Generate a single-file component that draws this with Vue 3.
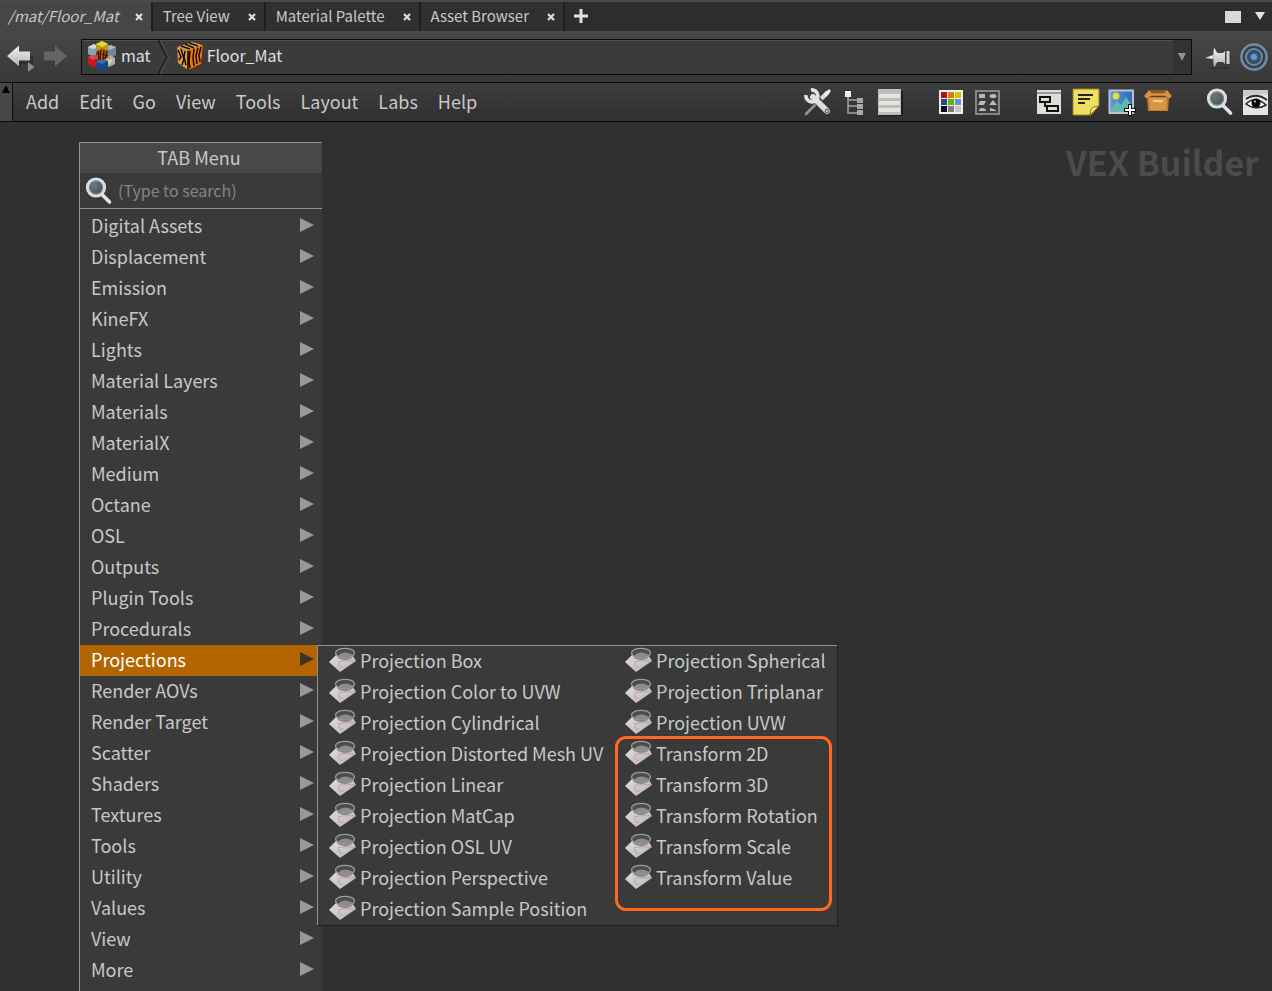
<script setup>
import { ref } from 'vue'

const tabs = [
  { name: '/mat/Floor_Mat', active: true },
  { name: 'Tree View' },
  { name: 'Material Palette' },
  { name: 'Asset Browser' },
]
const menus = ['Add', 'Edit', 'Go', 'View', 'Tools', 'Layout', 'Labs', 'Help']
const categories = [
  'Digital Assets', 'Displacement', 'Emission', 'KineFX', 'Lights', 'Material Layers',
  'Materials', 'MaterialX', 'Medium', 'Octane', 'OSL', 'Outputs', 'Plugin Tools',
  'Procedurals', 'Projections', 'Render AOVs', 'Render Target', 'Scatter', 'Shaders',
  'Textures', 'Tools', 'Utility', 'Values', 'View', 'More',
]
const nodes = [
  'Projection Box', 'Projection Color to UVW', 'Projection Cylindrical',
  'Projection Distorted Mesh UV', 'Projection Linear', 'Projection MatCap',
  'Projection OSL UV', 'Projection Perspective', 'Projection Sample Position',
  'Projection Spherical', 'Projection Triplanar', 'Projection UVW',
  'Transform 2D', 'Transform 3D', 'Transform Rotation', 'Transform Scale', 'Transform Value',
]
const selected = 'Projections'
const query = ref('')
const swatches = ['#b5121b', '#e07a10', '#d8c400', '#1c4f86', '#5cb800', '#6d8fd0', '#0a0a14', '#7c7c7c', '#c2c8c8']
</script>

<template>
  <div class="pane">
    <svg class="defs" aria-hidden="true">
      <defs>
        <linearGradient id="metal" x1="0" y1="0" x2="0" y2="1">
          <stop offset="0" stop-color="#f2f2ee" /><stop offset="1" stop-color="#b4b4b0" />
        </linearGradient>
        <radialGradient id="lens" cx=".4" cy=".35" r=".7">
          <stop offset="0" stop-color="#6d7a80" /><stop offset="1" stop-color="#3f4a50" />
        </radialGradient>
        <linearGradient id="paper" x1="0" y1="0" x2="1" y2="1">
          <stop offset="0" stop-color="#dedede" /><stop offset="1" stop-color="#b9b4b5" />
        </linearGradient>
        <linearGradient id="sky" x1="0" y1="0" x2="1" y2="0">
          <stop offset="0" stop-color="#5a9de0" /><stop offset="1" stop-color="#2c66b8" />
        </linearGradient>
        <symbol id="magnifier" viewBox="0 0 28 28">
          <path d="M17 17.500 24.500 25" stroke="#e2e2e2" stroke-width="3.600" stroke-linecap="round" />
          <circle cx="11" cy="10.500" r="8.600" fill="url(#lens)" stroke="#dcdedf" stroke-width="3" />
          <circle cx="11" cy="10.500" r="6.600" fill="none" stroke="#8b9499" stroke-width="1" />
        </symbol>
        <symbol id="node" viewBox="0 0 28 26">
          <path d="M0 15 8 7 24 9 27 14 11 25Z" fill="url(#paper)" />
          <path d="M7 7 9 11Q16 15 23 11L26 6Z" fill="#858585" />
          <ellipse cx="16" cy="6" rx="9.500" ry="4.700" fill="#4c4c4c" stroke="#9c9c9c" stroke-width="1.300" />
          <path d="M9 8.500Q15 3 24 8 17 13 9 8.500Z" fill="#8c8c8c" />
          <path d="M9 15Q15 13 26 14M10 16Q9 21 14 20" fill="none" stroke="#c99aa0" stroke-width="1" />
        </symbol>
      </defs>
    </svg>

    <header class="tabs">
      <div v-for="t in tabs" :key="t.name" class="tab" :class="{ active: t.active }">
        <button class="tab-name">{{ t.name }}</button>
        <button class="close" :aria-label="'Close ' + t.name">
          <svg width="8" height="8" viewBox="0 0 8 8"><path d="M1 1 7 7M7 1 1 7" stroke="#dedede" stroke-width="2.200" /></svg>
        </button>
      </div>
      <button class="add" aria-label="New tab">
        <svg width="16" height="16" viewBox="0 0 16 16"><path d="M8 1V15M1 8H15" stroke="#e0e0e0" stroke-width="3" /></svg>
      </button>
      <div class="window-tools">
        <button aria-label="Maximize pane"><svg width="16" height="14" viewBox="0 0 16 14"><path d="M0 1H16V13H0Z" fill="#d9d9d9" /></svg></button>
        <button aria-label="Pane menu"><svg width="10" height="14" viewBox="0 0 10 14"><path d="M0 2H10L5 10Z" fill="#e4e4e4" /></svg></button>
      </div>
    </header>

    <nav class="path">
      <button aria-label="Back">
        <svg width="32" height="32" viewBox="0 0 32 32">
          <path d="M5 18 17 29V23H29V15" fill="#252525" opacity=".6" />
          <path d="M3 15 15 4.500V10.500H26V19.500H15V25.500Z" fill="url(#metal)" />
          <path d="M24 21 30.500 26 24 31Z" fill="#8e8e8e" />
        </svg>
      </button>
      <button aria-label="Forward">
        <svg width="32" height="32" viewBox="0 0 32 32"><path d="M27 15 15 4.500V10.500H4V19.500H15V25.500Z" fill="#646464" /></svg>
      </button>
      <div class="field">
        <button class="crumb">
          <svg width="30" height="30" viewBox="0 0 30 30">
            <path d="M1 6 7 3 12 6V14L5 15 1 13Z" fill="#8ba2ad" /><path d="M1 6 7 3 12 6 6 8Z" fill="#c8dce4" />
            <path d="M18 7 23 4 29 6V14L23 17 18 14Z" fill="#71859f" /><path d="M18 7 23 4 29 6 23 9Z" fill="#a9b9ca" />
            <path d="M9 3 15 0 21 3V8L15 10 9 8Z" fill="#b99c08" /><path d="M9 3 15 0 21 3 15 6Z" fill="#e8d335" />
            <path d="M1 16 6 14 11 17V25L6 26 1 23Z" fill="#c81824" /><path d="M1 16 6 14 11 17 6 19Z" fill="#e64850" />
            <path d="M18 17 24 14 28 17V23L22 26 18 24Z" fill="#aaa" /><path d="M20 18 23 23M25 18 23 21" stroke="#f0d598" stroke-width="2" />
            <path d="M9 21 15 18 21 20V27L15 30 9 27Z" fill="#18458a" /><path d="M9 21 15 18 21 20 15 23Z" fill="#376fb6" />
            <path d="M9 10 15 7 21 10V17L15 20 9 17Z" fill="#b75b10" />
            <path d="M11 10 12 18M14 9 13 19M17 9 16 19M20 10 18 18M9 13 13 12M15 13 21 15" stroke="#2b1407" stroke-width="1.200" />
          </svg>
          <span>mat</span>
        </button>
        <svg class="chevron" width="11" height="34" viewBox="0 0 11 34"><path d="M0 0 9 17 0 34" fill="none" stroke="#1b1b1b" stroke-width="1.500" /><path d="M2 0 10.500 17 2 34" fill="none" stroke="#555" /></svg>
        <button class="crumb leaf">
          <svg width="28" height="30" viewBox="0 0 28 30">
            <path d="M1 6 16 1 27 4 25 23 12 29 2 22Z" fill="#120b06" />
            <path d="M1 6 16 1 27 4 12 10Z" fill="#d2a251" />
            <path d="M1 6 12 10V29L2 22Z" fill="#d99b40" />
            <path d="M12 10 27 4 25 23 12 29Z" fill="#ec740e" />
            <path d="M5 5 14 8M9 3 18 7M13 2 22 5M2 9 5 16 3 19M5 8 8 18 6 24M9 10 8 16 10 24M14 10 13 20 14 27M18 8 17 17 18 25M22 7 20 15 21 23M25 6 23 14 24 21M12 10V29" fill="none" stroke="#170a02" stroke-width="1.500" />
          </svg>
          <span>Floor_Mat</span>
        </button>
        <button class="drop" aria-label="Recent paths"><svg width="8" height="8" viewBox="0 0 8 8"><path d="M0 0H8L4 8Z" fill="#929292" /></svg></button>
      </div>
      <button aria-label="Pin">
        <svg width="28" height="28" viewBox="0 0 28 28">
          <path d="M1 15 9 12V16Z" fill="#e5e5e5" /><path d="M10 5C12 6 12 10 14 10H19L21 8V21L19 19H14C12 19 12 23 10 24 9 19 9 10 10 5Z" fill="url(#metal)" />
          <path d="M22.500 8H25.500V21H22.500Z" fill="#d2d2d2" /><path d="M6 25H25" stroke="#292929" />
        </svg>
      </button>
      <button class="link" aria-label="Link pane">
        <svg width="28" height="28" viewBox="0 0 28 28">
          <circle cx="14" cy="14" r="12.600" fill="#31404e" stroke="#748ba5" stroke-width="2.500" />
          <circle cx="14" cy="14" r="8" fill="#3c4855" stroke="#7188a3" stroke-width="2" />
          <circle cx="14" cy="14" r="5" fill="#355b86" /><circle cx="14" cy="14" r="3" fill="#5f9be2" />
        </svg>
      </button>
    </nav>

    <div class="menubar">
      <button class="stow" aria-label="Stow bar"><svg width="10" height="8" viewBox="0 0 10 8"><path d="M5 0 9 8H1Z" fill="#000" /></svg></button>
      <button v-for="m in menus" :key="m" class="menu">{{ m }}</button>
      <div class="tools">
        <div class="group">
          <button aria-label="Tools">
            <svg width="28" height="28" viewBox="0 0 28 28">
              <path d="M2 26 14 14" stroke="#929292" stroke-width="2.600" stroke-linecap="round" />
              <path d="M14 14 24 4" stroke="#d8d8d8" stroke-width="4.500" />
              <path d="M20 6 25 1 27 3 22 9Z" fill="#ededed" />
              <path d="M12 11 23 23" stroke="#3a3a3a" stroke-width="8" stroke-linecap="round" />
              <path d="M9 9 23 23" stroke="#dededb" stroke-width="6" stroke-linecap="round" />
              <path d="M7 2A6 6 0 1 1 2 7" fill="none" stroke="#e3e3e0" stroke-width="3.600" />
              <circle cx="23" cy="23" r="2" fill="#bbb" stroke="#555" />
            </svg>
          </button>
          <button aria-label="Tree view">
            <svg width="28" height="28" viewBox="0 0 28 28"><path d="M8 8V25H18M8 12H18M8 18H18" fill="none" stroke="#a4a4a4" stroke-width="1.500" /><path d="M5 3H11V9H5Z" fill="#eee" /><path d="M17 10H23V15H17ZM17 16H23V21H17ZM17 22H23V27H17Z" fill="#a9a9a9" /></svg>
          </button>
          <button aria-label="List view">
            <svg width="28" height="28" viewBox="0 0 28 28"><path d="M3 3H27V28H3Z" fill="#1b1b1b" /><path d="M2 1H25V27H2Z" fill="#bdbdb8" /><path d="M3 6H24V10H3ZM3 13H24V17H3ZM3 20H24V24H3Z" fill="#e3e3e0" /></svg>
          </button>
        </div>
        <div class="group">
          <button aria-label="Color palette">
            <svg width="28" height="28" viewBox="0 0 28 28"><path d="M1 2H25V26H1Z" fill="#f0f0f0" /><rect v-for="(c, i) in swatches" :key="c" :x="3 + (i % 3) * 7" :y="4 + Math.floor(i / 3) * 7" width="6" height="6" :fill="c" /></svg>
          </button>
          <button aria-label="Shape palette">
            <svg width="28" height="28" viewBox="0 0 28 28"><path d="M2 3H25V26H2Z" fill="#3b3b3b" stroke="#868686" stroke-width="2" /><path d="M5 6H11V10H5ZM6 13H12L10 17H4ZM15 17 19 12 23 17ZM5 23Q5 20 8 20 12 20 12 23ZM16 23V20L22 22V23Z" fill="#b9b9b9" /><ellipse cx="19" cy="8" rx="3.500" ry="2" fill="#b9b9b9" /></svg>
          </button>
        </div>
        <div class="group">
          <button aria-label="Network box">
            <svg width="28" height="28" viewBox="0 0 28 28"><path d="M1 2H25V26H1Z" fill="#deded9" /><path d="M1 5H25" stroke="#555" /><path d="M4 9H14V14H4ZM11 18H22V23H11ZM9 14V18H11" fill="none" stroke="#111" stroke-width="2" /></svg>
          </button>
          <button aria-label="Sticky note">
            <svg width="28" height="28" viewBox="0 0 28 28"><path d="M1 1H27V18L19 27H1Z" fill="#ecdf61" stroke="#9c8519" /><path d="M27 18 18 27C19 22 18 19 27 18Z" fill="#fff09c" stroke="#7d6813" /><path d="M6 7H21M6 11H18M6 15H13" stroke="#272617" stroke-width="2" /></svg>
          </button>
          <button aria-label="Background image">
            <svg width="30" height="28" viewBox="0 0 30 28"><path d="M2.500 2.500H26V25H2.500Z" fill="url(#sky)" stroke="#b8c3d1" stroke-width="2" /><circle cx="9" cy="8" r="3.500" fill="#f2d43b" /><path d="M4 21 10 13 14 17 19 9 25 18V24H4Z" fill="#65b7ae" /><path d="M21 16H25V20H29V24H25V28H21V24H17V20H21Z" fill="#111" /><path d="M23 17V27M18 22H28" stroke="#fff" stroke-width="2" /></svg>
          </button>
          <button aria-label="Asset box">
            <svg width="28" height="28" viewBox="0 0 28 28"><path d="M3 9H25L24 23H4Z" fill="#c47b2e" /><path d="M5 2H23L25 8H3Z" fill="#8e571d" /><path d="M5 2 0 8 3 11 7 8H21L25 11 28 8 23 2 20 5H8Z" fill="#d39549" stroke="#8d561d" stroke-width=".7" /><path d="M5 10H23L22 22H6Z" fill="#d89646" /><path d="M9 13H19" stroke="#f5cb8c" stroke-width="2" /></svg>
          </button>
        </div>
        <div class="group">
          <button aria-label="Find node"><svg width="28" height="28"><use href="#magnifier" /></svg></button>
          <button aria-label="Display options">
            <svg width="28" height="28" viewBox="0 0 28 28"><path d="M1 2H26V27H1Z" fill="#e5e5e5" /><path d="M1 2H26V7Q14 4 1 9Z" fill="#c9c9c9" /><path d="M4 11Q14 4 25 12" fill="none" stroke="#292929" stroke-width="1.800" /><path d="M4 16Q13 7 24 17 14 23 4 16Z" fill="#fff" stroke="#252525" stroke-width="1.500" /><circle cx="14" cy="15" r="4.500" fill="#090909" /><circle cx="13" cy="13.500" r="1" fill="#ddd" /></svg>
          </button>
        </div>
      </div>
    </div>

    <main class="network">
      <h1>VEX Builder</h1>
      <section class="tab-menu">
        <h2>TAB Menu</h2>
        <label class="search">
          <svg width="28" height="28"><use href="#magnifier" /></svg>
          <input v-model="query" type="text" placeholder="(Type to search)" aria-label="Search nodes" />
        </label>
        <ul class="categories">
          <li v-for="c in categories" :key="c">
            <button class="category" :class="{ selected: c === selected }">
              {{ c }}
              <svg width="14" height="14" viewBox="0 0 14 14"><path d="M0 0 14 7 0 14Z" fill="currentColor" /></svg>
            </button>
            <div v-if="c === selected" class="submenu">
              <button v-for="n in nodes" :key="n" class="node"><svg width="28" height="26"><use href="#node" /></svg>{{ n }}</button>
              <div class="highlight"></div>
            </div>
          </li>
        </ul>
      </section>
    </main>
  </div>
</template>

<style>
html, body, #app { height: 100%; }
body { margin: 0; overflow: hidden; background: #303030; }
</style>

<style scoped>
.pane { height: 100%; display: flex; flex-direction: column; color: #c8c8c8; font-family: "Noto Sans CJK SC", "Noto Sans", sans-serif; font-size: 18px; line-height: 30px; }
.defs { position: absolute; width: 0; height: 0; }
button { display: flex; align-items: center; justify-content: center; padding: 0; border: 0; background: none; color: inherit; font: inherit; white-space: nowrap; }
svg { display: block; flex: none; }
.tabs { flex: none; display: flex; height: 29px; border-top: 2px solid #4a4a4a; background: #2d2d2d; font-size: 15px; }
.tab { display: flex; align-items: center; gap: 16px; padding: 0 8px 0 10px; border-right: 2px solid #1e1e1e; background: #303030; }
.tab.active { padding-left: 8px; background: #464646; font-style: italic; }
.tab-name { height: 28px; padding-bottom: 2px; }
.close { width: 8px; height: 28px; }
.tab + .tab .close { margin-left: 2px; }
.add { width: 32px; height: 28px; }
.window-tools { display: flex; gap: 14px; margin-left: auto; padding-right: 7px; }
.path { flex: none; display: flex; align-items: center; height: 51px; padding: 0 4px; background: linear-gradient(#484848, #373737); }
.path > button:nth-child(2) { margin: 0 9px 0 4px; }
.field { flex: 1; display: flex; height: 34px; margin-right: 12px; border: 1px solid #0c0c0c; background: #3b3b3b; box-shadow: inset 0 1px #505050; color: #e0e0e0; font-size: 16px; }
.crumb { gap: 4px; padding: 0 7px 2px 5px; }
.crumb span { padding-bottom: 2px; }
.leaf { gap: 3px; padding-left: 7px; }
.drop { width: 18px; margin-left: auto; background: #333; }
.path .link { margin-left: 8px; }
.menubar { flex: none; display: flex; height: 38px; border: solid #0c0c0c; border-width: 1px 0; background: linear-gradient(#3e3e3e, #303030); }
.stow { align-items: flex-start; width: 13px; padding-top: 2px; margin-right: 2px; border-right: 1px solid #0c0c0c; background: #474747; }
.menu { padding: 0 10px 2px 11px; }
.menu + .menu { padding-left: 10px; }
.tools { display: flex; align-items: center; gap: 34px; margin-left: auto; padding-right: 2px; }
.group { display: flex; gap: 8px; }
.group button { width: 28px; height: 28px; }
.network { flex: 1; min-height: 0; position: relative; display: flex; align-items: flex-start; padding: 20px 0 0 79px; background: #303030; }
h1 { position: absolute; top: 12px; right: 13px; margin: 0; color: #4b4b4b; font-size: 34px; line-height: 56px; font-weight: 700; }
.tab-menu { width: 242px; border-top: 1px solid #929292; border-left: 1px solid #929292; background: #3a3a3a; }
.tab-menu h2 { margin: 0; padding: 0 4px 2px 0; background: #484848; font-size: 18px; line-height: 28px; font-weight: 400; text-align: center; }
.search { display: flex; align-items: center; gap: 5px; height: 35px; padding-left: 5px; border-bottom: 1px solid #929292; }
.search input { flex: 1; min-width: 0; padding: 0 0 2px; border: 0; outline: 0; background: none; color: #c8c8c8; font: inherit; font-size: 16px; }
.search input::placeholder { color: #858585; opacity: 1; }
.categories { margin: 0; padding: 2px 0 8px; list-style: none; }
.categories li { position: relative; }
.category { justify-content: space-between; width: 100%; height: 31px; padding: 0 8px 3px 11px; }
.category svg { color: #999; }
.selected { background: #b36500; color: #fff; }
.selected svg { color: #3d3428; }
.submenu { position: absolute; z-index: 1; top: 0; left: 237px; display: grid; grid-template-rows: repeat(9, 31px); grid-auto-flow: column; grid-template-columns: 296px 223px; border: solid #929292; border-width: 1px 0 0 1px; background: #3a3a3a; box-shadow: 1px 1px #202020; }
.node { justify-content: flex-start; gap: 3px; padding: 0 0 3px 11px; }
.highlight { position: absolute; top: 90px; right: 5px; bottom: 14px; width: 211px; border: 3px solid #ff691e; border-radius: 11px; pointer-events: none; }
</style>
